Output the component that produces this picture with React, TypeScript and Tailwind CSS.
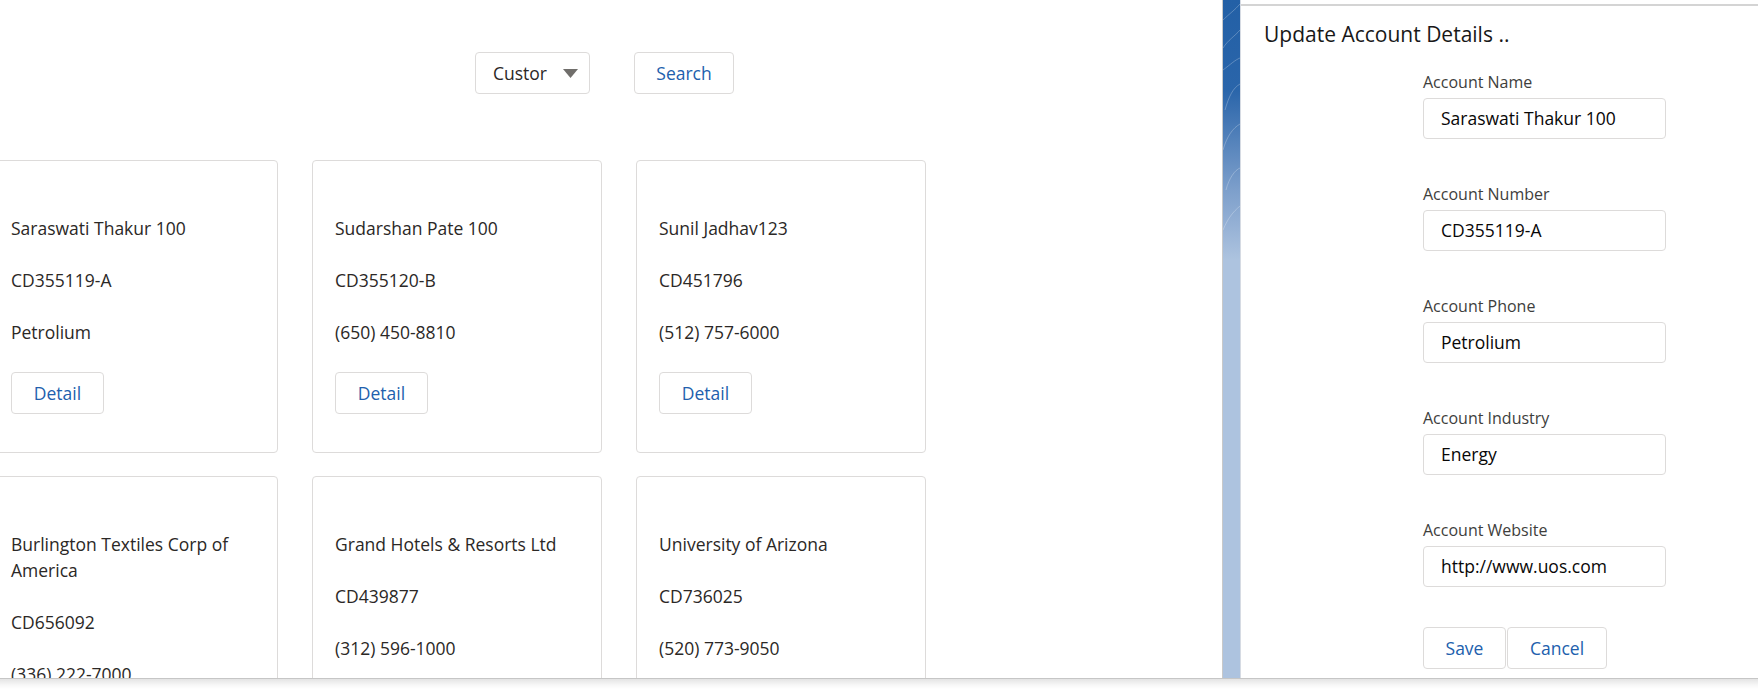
import React from 'react';

const font = { fontFamily: '"Open Sans", "Liberation Sans", sans-serif' };

const accounts = [
  { name: 'Saraswati Thakur 100', number: 'CD355119-A', extra: 'Petrolium' },
  { name: 'Sudarshan Pate 100', number: 'CD355120-B', extra: '(650) 450-8810' },
  { name: 'Sunil Jadhav123', number: 'CD451796', extra: '(512) 757-6000' },
  { name: 'Burlington Textiles Corp of America', number: 'CD656092', extra: '(336) 222-7000' },
  { name: 'Grand Hotels & Resorts Ltd', number: 'CD439877', extra: '(312) 596-1000' },
  { name: 'University of Arizona', number: 'CD736025', extra: '(520) 773-9050' },
];

const fields = [
  { label: 'Account Name', value: 'Saraswati Thakur 100' },
  { label: 'Account Number', value: 'CD355119-A' },
  { label: 'Account Phone', value: 'Petrolium' },
  { label: 'Account Industry', value: 'Energy' },
  { label: 'Account Website', value: 'http://www.uos.com' },
];

const AccountCard = ({ item }: { item: (typeof accounts)[number]; key?: React.Key }) => (
  <div className="w-[290px] rounded-[4px] border border-[#dddbda] bg-white pl-[22px] pr-4 pt-[54px] pb-[38px]">
    <p className="mb-[26px] text-[17.5px] leading-[26px] text-[#2b2826]">{item.name}</p>
    <p className="mb-[26px] text-[17.5px] leading-[26px] text-[#2b2826]">{item.number}</p>
    <p className="mb-[27px] text-[17.5px] leading-[26px] text-[#2b2826]">{item.extra}</p>
    <button className="h-[42px] w-[93px] rounded-[4px] border border-[#dddbda] bg-white text-[17.5px] text-[#2160ad]">
      Detail
    </button>
  </div>
);

const Strip = () => (
  <div className="w-[19px] shrink-0 border-l border-[#c9c9c9] border-r border-r-[#d6dbe3] bg-[linear-gradient(180deg,#2360a6_0px,#2a65aa_90px,#7d9fcb_190px,#adc3df_260px,#adc3df_100%)]">
    <svg width="17" height="300" viewBox="0 0 17 300" fill="none" stroke="#ffffff" strokeOpacity="0.25" strokeWidth="1">
      <path d="M0 20 C6 14 12 10 17 4" />
      <path d="M0 48 C5 40 12 36 17 30" />
      <path d="M0 70 C8 64 12 60 17 58" />
      <path d="M2 110 C6 96 10 88 17 84" />
      <path d="M0 150 C4 136 10 128 17 124" />
      <path d="M3 190 C6 178 12 170 17 168" />
      <path d="M0 230 C5 218 10 212 17 206" />
    </svg>
  </div>
);

export default function App() {
  return (
    <div className="flex h-[689px] w-[1758px] flex-col overflow-hidden bg-white" style={font}>
      <div className="flex min-h-0 flex-1">
        {/* listing */}
        <div className="w-[1222px] shrink-0 overflow-hidden">
          <div className="flex items-center gap-[44px] pl-[475px] pt-[52px]">
            <div className="flex h-[42px] w-[115px] items-center justify-between rounded-[4px] border border-[#dddbda] pl-[17px] pr-[11px]">
              <span className="text-[17.5px] text-[#2b2826]">Custor</span>
              <svg width="15" height="9" viewBox="0 0 15 9">
                <path d="M0 0H15L7.5 9Z" fill="#706e6b" />
              </svg>
            </div>
            <button className="h-[42px] w-[100px] rounded-[4px] border border-[#dddbda] bg-white text-[17.5px] text-[#2160ad]">
              Search
            </button>
          </div>
          <div className="-ml-3 mt-[66px] grid w-max grid-cols-[290px_290px_290px] gap-x-[34px] gap-y-[23px]">
            {accounts.map((a) => (
              <AccountCard key={a.number} item={a} />
            ))}
          </div>
        </div>

        <Strip />

        {/* edit panel */}
        <div className="flex-1 pt-1">
          <div className="h-full border-t-2 border-[#d4d4d4] pl-[23px] pt-[14px]">
            <h2 className="text-[21px] leading-[28px] text-[#181818]">Update Account Details ..</h2>
            <div className="ml-[159px] mt-[24px] w-[243px]">
              {fields.map((f) => (
                <div key={f.label} className="mb-[45px]">
                  <label className="block text-[16px] leading-[20px] text-[#3e3e3c]">{f.label}</label>
                  <div className="mt-[6px] flex h-[41px] items-center rounded-[4px] border border-[#dddbda] px-[17px] text-[17.5px] text-[#080707]">
                    {f.value}
                  </div>
                </div>
              ))}
              <div className="-mt-[5px] flex gap-px">
                <button className="h-[42px] w-[83px] rounded-[4px] border border-[#dddbda] bg-white text-[17.5px] text-[#2160ad]">
                  Save
                </button>
                <button className="h-[42px] w-[100px] rounded-[4px] border border-[#dddbda] bg-white text-[17.5px] text-[#2160ad]">
                  Cancel
                </button>
              </div>
            </div>
          </div>
        </div>
      </div>
      <div className="h-[11px] shrink-0 border-t border-[#c6c6c6] bg-[linear-gradient(180deg,#e4e4e4,#f7f7f7_60%,#ffffff)]" />
    </div>
  );
}
